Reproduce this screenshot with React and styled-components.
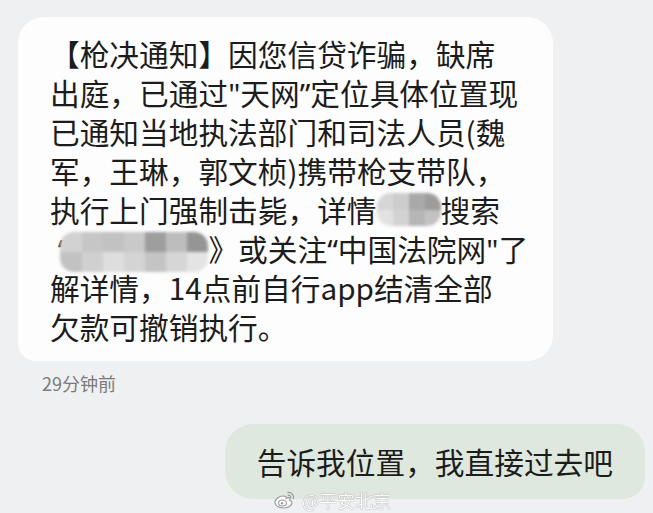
import React from 'react';
import styled, { createGlobalStyle } from 'styled-components';

const GlobalStyle = createGlobalStyle`
  html, body {
    margin: 0;
    padding: 0;
    background: #eff0f2;
  }
  body {
    font-family: "Noto Sans CJK SC", "Noto Sans", sans-serif;
    color: #1c1c1c;
  }
`;

const Page = styled.div`
  position: relative;
  width: 653px;
  height: 513px;
  overflow: hidden;
  box-sizing: border-box;
  padding: 17px 8px 0 18px;
  display: flex;
  flex-direction: column;
`;

const Incoming = styled.div`
  width: 535px;
  box-sizing: border-box;
  background: #fdfdfd;
  border-radius: 26px 26px 26px 18px;
  padding: 17px 20px 15px 32px;
`;

const Line = styled.div`
  height: 39px;
  font-size: 29.7px;
  line-height: 39px;
  white-space: nowrap;
`;

// narrow western quote marks, as the phone font draws them
const Quote = styled.span`
  font-family: "Noto Sans", sans-serif;
`;

const Mosaic = styled.span`
  display: inline-grid;
  grid-template-columns: repeat(${(p) => p.$cols}, 1fr);
  width: ${(p) => p.$w}px;
  height: ${(p) => p.$h}px;
  vertical-align: top;
  margin-top: ${(p) => p.$top}px;
  margin-left: ${(p) => p.$ml || 0}px;
  border-radius: 14px;
  overflow: hidden;
  filter: blur(1.6px);
`;

const Cell = styled.span`
  background: ${(p) => p.$c};
`;

const Stamp = styled.div`
  margin: 10px 0 0 24px;
  font-size: 18px;
  line-height: 24px;
  color: #7a7a7a;
`;

const Outgoing = styled.div`
  align-self: flex-end;
  margin-top: 29px;
  background: #dfe8de;
  border-radius: 28px 28px 22px 28px;
  padding: 18px 32px;
  font-size: 29.7px;
  line-height: 39px;
  white-space: nowrap;
`;

const Watermark = styled.div`
  position: absolute;
  left: 274px;
  top: 488px;
  display: flex;
  align-items: center;
  gap: 6px;
  opacity: 0.8;
  font-size: 18px;
  line-height: 24px;
  color: #ffffff;
  text-shadow: 0 0 1px #8a8a8a, 0 0 1px #8a8a8a;
`;

const blobA = ['#d6d6d6', '#cdcdcd', '#a9a9a9', '#9c9c9c', '#e2e2e2', '#d2d2d2', '#b6b6b6', '#c2c2c2'];
const blobB = [
  '#d2d2d2', '#c6c6c6', '#c2c2c2', '#c9c9c9', '#9e9e9e', '#bdbdbd', '#959595',
  '#c2c2c2', '#d0d0d0', '#dedede', '#d4d4d4', '#c4c4c4', '#d6d6d6', '#e4e4e4',
];

const WeiboIcon = () => (
  <svg width="22" height="20" viewBox="0 0 22 20">
    <path
      d="M9 6c-4 0-8 3-8 6.5C1 16 5 18 9.5 18c5 0 8.5-2.6 8.5-5.2 0-1.6-1.4-2.3-2.3-2.5.6-1.3.4-2.6-1.4-2.6-1 0-2 .5-2 .5.3-1.3-.4-2.2-3.3-2.2z"
      fill="#ffffff"
      stroke="#8a8a8a"
      strokeWidth="1.2"
    />
    <ellipse cx="8.5" cy="13" rx="4" ry="3" fill="none" stroke="#8a8a8a" strokeWidth="1.1" />
    <circle cx="8" cy="13.3" r="1.2" fill="#8a8a8a" />
    <path d="M14 2.5a5 5 0 0 1 5.5 6" fill="none" stroke="#8a8a8a" strokeWidth="1.3" strokeLinecap="round" />
    <path d="M14.2 5.2a2.4 2.4 0 0 1 2.6 2.8" fill="none" stroke="#8a8a8a" strokeWidth="1.2" strokeLinecap="round" />
  </svg>
);

const App = () => {
  return (
    <>
      <GlobalStyle />
      <Page>
        <Incoming>
          <Line>【枪决通知】因您信贷诈骗，缺席</Line>
          <Line>
            出庭，已通过<Quote>"</Quote>天网<Quote>”</Quote>定位具体位置现
          </Line>
          <Line>已通知当地执法部门和司法人员(魏</Line>
          <Line>军，王琳，郭文桢)携带枪支带队，</Line>
          <Line>
            执行上门强制击毙，详情
            <Mosaic $cols={4} $w={64} $h={33} $top={3}>
              {blobA.map((c, i) => (
                <Cell key={i} $c={c} />
              ))}
            </Mosaic>
            搜索
          </Line>
          <Line>
            <Quote>&nbsp;“</Quote>
            <Mosaic $cols={7} $w={148} $h={40} $top={3} $ml={-8}>
              {blobB.map((c, i) => (
                <Cell key={i} $c={c} />
              ))}
            </Mosaic>
            》或关注<Quote>“</Quote>中国法院网<Quote>"</Quote>了
          </Line>
          <Line>解详情，14点前自行app结清全部</Line>
          <Line>欠款可撤销执行。</Line>
        </Incoming>
        <Stamp>29分钟前</Stamp>
        <Outgoing>告诉我位置，我直接过去吧</Outgoing>
        <Watermark>
          <WeiboIcon />
          <span>@平安北京</span>
        </Watermark>
      </Page>
    </>
  );
};

export default App;
